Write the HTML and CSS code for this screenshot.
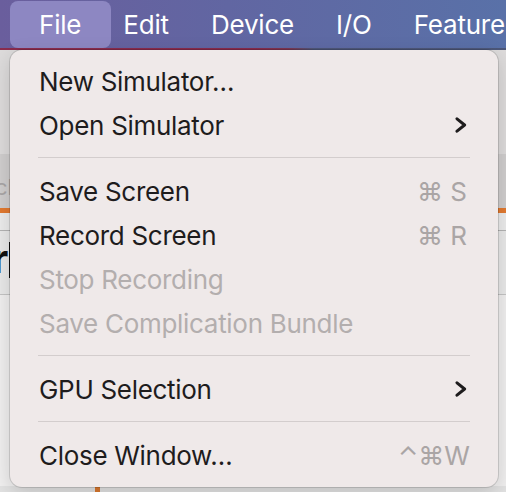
FILE: index.html
```html
<!DOCTYPE html>
<html lang="en">
<head>
    <meta charset="UTF-8">
    <meta name="viewport" content="width=device-width, initial-scale=1.0">
    <title>Simulator - File menu</title>
    <link rel="stylesheet" href="styles.css">
</head>
<body>
    <div class="menubar">
        <span class="menu-title active">File</span>
        <span class="menu-title">Edit</span>
        <span class="menu-title">Device</span>
        <span class="menu-title">I/O</span>
        <span class="menu-title">Features</span>
    </div>
    <div class="menubar-edge"></div>

    <div class="window">
        <div class="toolbar-top"></div>
        <div class="toolbar-bottom"><span class="toolbar-label">cl</span></div>
        <div class="accent-line"></div>
        <div class="tab-row"></div>
        <div class="title-row"><span class="big-title">r</span><span class="caret"></span></div>
        <div class="content-area"></div>
        <div class="footer-row"><span class="footer-mark"></span></div>
    </div>

    <!-- dropdown for the File menu -->
    <div class="dropdown">
        <div class="item">New Simulator…</div>
        <div class="item">Open Simulator
            <svg class="chevron" width="12" height="16" viewBox="0 0 12 16"><polyline points="2,1.8 9.6,8 2,14.2" /></svg>
        </div>
        <div class="sep"></div>
        <div class="item">Save Screen <span class="shortcut">⌘ S</span></div>
        <div class="item">Record Screen <span class="shortcut">⌘ R</span></div>
        <div class="item disabled">Stop Recording</div>
        <div class="item disabled">Save Complication Bundle</div>
        <div class="sep"></div>
        <div class="item">GPU Selection
            <svg class="chevron" width="12" height="16" viewBox="0 0 12 16"><polyline points="2,1.8 9.6,8 2,14.2" /></svg>
        </div>
        <div class="sep"></div>
        <div class="item">Close Window… <span class="shortcut wide">⌃⌘W</span></div>
    </div>
</body>
</html>
```

FILE: styles.css
```css
body {
    font-family: Inter, "Noto Sans", sans-serif;
    margin: 0;
    width: 506px;
    height: 492px;
    overflow: hidden;
    position: relative;
    background-color: #f1f0f0;
}
.menubar {
    display: flex;
    align-items: center;
    height: 48px;
    padding-left: 10px;
    white-space: nowrap;
    background: linear-gradient(90deg, #6a5e9d 0%, #6166a2 45%, #5971a8 100%);
}
.menu-title {
    color: #fff;
    font-size: 26px;
    letter-spacing: -0.2px;
    line-height: 47px;
    padding: 0 21px;
}
.menu-title.active {
    padding: 0 30px 0 29px;
    margin-right: -9px;
    height: 47px;
    border-radius: 8px;
    background-color: #8d87c2;
}
.menubar-edge {
    height: 2px;
    background: linear-gradient(90deg, #8a2c4e 0%, #862b4c 50%, #7b3550 57%, #4d5678 62%, #4c5779 100%);
}
.window {
    display: flex;
    flex-direction: column;
    height: 442px;
}
.toolbar-top {
    height: 104px;
    background-color: #dddbdb;
}
.toolbar-bottom {
    height: 54px;
    background-color: #d0cece;
    overflow: hidden;
}
.toolbar-label {
    display: inline-block;
    margin-left: -5px;
    margin-top: 20px;
    font-size: 22px;
    color: #a9a6a6;
}
.accent-line {
    height: 5px;
    background-color: #e27a30;
}
.tab-row {
    height: 17px;
    background-color: #ececec;
    border-bottom: 1px solid #b4b4b4;
}
.title-row {
    display: flex;
    align-items: flex-start;
    height: 63px;
    background-color: #e9e9e9;
    border-bottom: 1px solid #c4c4c4;
    overflow: hidden;
}
.big-title {
    margin-left: -8px;
    margin-top: 6px;
    font-size: 40px;
    line-height: 44px;
    font-weight: 700;
    color: #111;
}
.caret {
    width: 3px;
    height: 36px;
    margin: 11px 0 0 1px;
    background-color: #111;
}
.content-area {
    flex: 1;
    background-color: #f0efef;
}
.footer-row {
    height: 6px;
    background-color: #e2e2e2;
}
.footer-mark {
    display: block;
    width: 5px;
    height: 6px;
    margin-left: 95px;
    background-color: #d9782f;
}
.dropdown {
    position: absolute;
    top: 50px;
    left: 10px;
    width: 488px;
    padding: 9px 0 10px;
    box-sizing: border-box;
    background-color: #efe9e9;
    border-radius: 12px;
    box-shadow: 0 0 0 1px rgba(0, 0, 0, 0.13), 0 6px 20px rgba(0, 0, 0, 0.16);
}
.item {
    display: flex;
    align-items: center;
    justify-content: space-between;
    height: 44px;
    padding: 0 31px 0 29px;
    font-size: 26px;
    letter-spacing: -0.3px;
    color: #1e1c1d;
}
.item.disabled {
    color: #b3aeae;
}
.shortcut {
    color: #aaa5a5;
    letter-spacing: 0;
    font-family: Inter, "DejaVu Sans", sans-serif;
}
.shortcut.wide {
    margin-right: -3px;
}
.chevron polyline {
    fill: none;
    stroke: #1e1c1d;
    stroke-width: 3;
    stroke-linecap: round;
    stroke-linejoin: round;
}
.sep {
    height: 1px;
    margin: 10px 28px 11px 28px;
    background-color: #d3cdcd;
}
```
